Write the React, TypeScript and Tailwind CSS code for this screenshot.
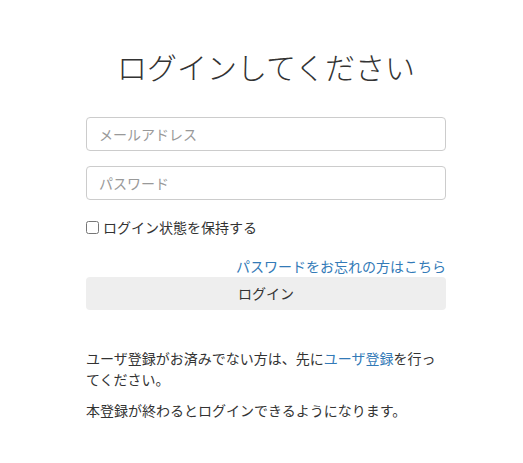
import { useState } from 'react';

export default function App() {
  const [remember, setRemember] = useState(false);

  return (
    <div
      className="min-h-[463px] bg-white text-[14px] leading-[1.5] text-[#333]"
      style={{ fontFamily: '"Noto Sans CJK JP", "Noto Sans", sans-serif' }}
    >
      <div className="ml-[86px] w-[360px] pt-[50px]">
        <h1 className="text-center text-[30px] font-light leading-[1.1] text-[#333]">
          ログインしてください
        </h1>

        <form className="mt-[34px] flex flex-col" onSubmit={(e) => e.preventDefault()}>
          <input
            type="email"
            placeholder="メールアドレス"
            className="h-[34px] rounded-[4px] border border-[#ccc] px-3 text-[14px] text-[#555] placeholder:text-[#999] outline-none"
          />
          <input
            type="password"
            placeholder="パスワード"
            className="mt-[15px] h-[34px] rounded-[4px] border border-[#ccc] px-3 text-[14px] text-[#555] placeholder:text-[#999] outline-none"
          />

          <label className="mt-[17px] flex items-center gap-[4px]">
            <input
              type="checkbox"
              checked={remember}
              onChange={(e) => setRemember(e.target.checked)}
              className="m-0 h-[13px] w-[13px]"
            />
            ログイン状態を保持する
          </label>

          <div className="mt-[18px] text-right">
            <a href="#" className="text-[#337ab7] no-underline">
              パスワードをお忘れの方はこちら
            </a>
          </div>

          <button
            type="submit"
            className="h-[33px] rounded-[4px] bg-[#eee] text-[14px] text-[#333]"
          >
            ログイン
          </button>
        </form>

        <div className="mt-[38px]">
          <p className="mb-[10px]">
            ユーザ登録がお済みでない方は、先に
            <a href="#" className="text-[#337ab7]">ユーザ登録</a>
            を行ってください。
          </p>
          <p>本登録が終わるとログインできるようになります。</p>
        </div>
      </div>
    </div>
  );
}
